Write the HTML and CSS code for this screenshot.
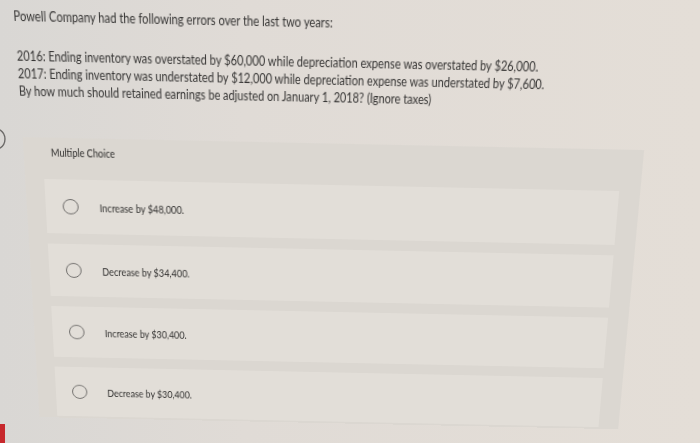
FILE: index.html
```html
<!DOCTYPE html>
<html lang="en">
<head>
<meta charset="utf-8">
<title>Multiple Choice</title>
<link rel="stylesheet" href="styles.css">
</head>
<body>
<div class="sheet">
  <div class="question">
    <p class="intro">Powell Company had the following errors over the last two years:</p>
    <p class="details">2016: Ending inventory was overstated by $60,000 while depreciation expense was overstated by $26,000.<br>2017: Ending inventory was understated by $12,000 while depreciation expense was understated by $7,600.<br>By how much should retained earnings be adjusted on January 1, 2018? (Ignore taxes)</p>
  </div>
  <section class="panel">
    <div class="panel-head"><span class="head-text">Multiple Choice</span></div>
    <ul class="choices">
      <li class="choice"><span class="radio"></span><span class="label">Increase by $48,000.</span></li>
      <li class="choice"><span class="radio"></span><span class="label">Decrease by $34,400.</span></li>
      <li class="choice"><span class="radio"></span><span class="label">Increase by $30,400.</span></li>
      <li class="choice"><span class="radio"></span><span class="label">Decrease by $30,400.</span></li>
    </ul>
  </section>
</div>
<svg class="edge-ring" width="6" height="24" viewBox="0 0 6 24"><path d="M0 2.8 A11 11 0 0 1 0 21.2" fill="none" stroke="#6c6a68" stroke-width="1.4"/></svg>
<span class="red-tab"></span>
</body>
</html>
```
FILE: styles.css
```css
html, body {
  margin: 0;
  padding: 0;
  height: 100%;
  overflow: hidden;
}
body {
  background: linear-gradient(90deg, #d9d7d4 0%, #e0dbd6 35%, #e4ded7 100%);
  font-family: Lato, "Open Sans", Arial, sans-serif;
  color: #363534;
  position: relative;
}
.sheet {
  width: 656px;
  height: 420px;
  margin-left: 20px;
  position: relative;
  top: 12px;
  transform: rotate(1.2deg) perspective(1000px) rotateX(-14deg);
  transform-origin: 330px 188px;
}
.question {
  padding: 5px 0 0 4px;
}
.intro,
.details {
  font-size: 12.5px;
  line-height: 17px;
  transform: scaleX(0.86);
  transform-origin: 0 0;
  white-space: nowrap;
}
.intro {
  margin: 0;
}
.details {
  margin: 21px 0 0 1px;
}
.panel {
  margin: 37px 0 0 6px;
  width: 613px;
  background: #dbd7d1;
  padding-bottom: 2px;
}
.panel-head {
  padding: 3px 0 0 27px;
  height: 30px;
  box-sizing: border-box;
}
.head-text {
  display: inline-block;
  font-size: 10.6px;
  color: #2c2b2a;
  transform: scaleX(0.86);
  transform-origin: 0 0;
}
.choices {
  list-style: none;
  margin: 12px 0 0;
  padding: 0 0 0 19px;
  display: flex;
  flex-direction: column;
  gap: 11px;
}
.choice {
  display: flex;
  align-items: center;
  height: 56px;
  background: #e2ded8;
  padding-left: 17px;
  margin-right: 21px;
}
.radio {
  width: 16px;
  height: 16px;
  box-sizing: border-box;
  border: 1.3px solid #6f6d6b;
  border-radius: 50%;
  flex: none;
}
.label {
  display: inline-block;
  margin-left: 21px;
  font-size: 10.8px;
  color: #333231;
  transform: scaleX(0.86);
  transform-origin: 0 50%;
}
.edge-ring {
  position: absolute;
  left: 0;
  top: 127px;
}
.red-tab {
  position: absolute;
  left: 0;
  top: 424px;
  width: 5px;
  height: 19px;
  background: #c7282c;
}
```
